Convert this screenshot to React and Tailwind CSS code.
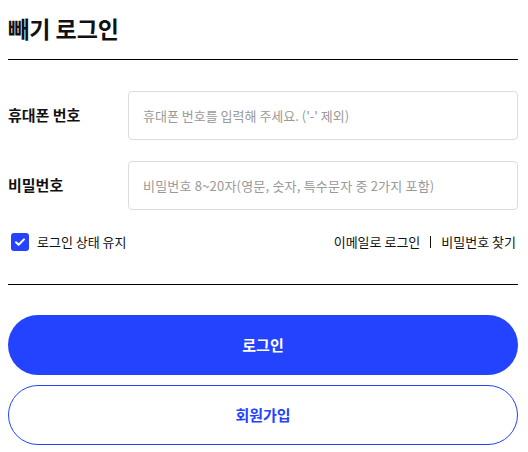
export default function App() {
  return (
    <div className="bg-white pl-2 pr-[10px] font-['Noto_Sans_CJK_KR',sans-serif] text-[#111]">
      <div className="h-[60px] flex items-center border-b border-black">
        <h1 className="text-[23px] font-bold leading-none -mt-[2px]">빼기 로그인</h1>
      </div>

      {/* 입력 */}
      <div className="mt-[31px] flex items-center">
        <label className="w-[120px] text-[15px] font-bold">휴대폰 번호</label>
        <input
          className="flex-1 h-[49px] border border-[#dcdcdc] rounded-[4px] px-[14px] text-[13px] placeholder:text-[#999] outline-none"
          placeholder="휴대폰 번호를 입력해 주세요. ('-' 제외)"
        />
      </div>
      <div className="mt-[21px] flex items-center">
        <label className="w-[120px] text-[15px] font-bold">비밀번호</label>
        <input
          type="password"
          className="flex-1 h-[49px] border border-[#dcdcdc] rounded-[4px] px-[14px] text-[13px] tracking-[0.2px] placeholder:text-[#999] outline-none"
          placeholder="비밀번호 8~20자(영문, 숫자, 특수문자 중 2가지 포함)"
        />
      </div>

      <div className="mt-[23px] h-[18px] flex items-center justify-between text-[13px]">
        <label className="flex items-center gap-[8px] pl-[3px]">
          <span className="w-[18px] h-[18px] rounded-[3px] bg-[#2443ff] flex items-center justify-center">
            <svg width="12" height="12" viewBox="0 0 12 12" fill="none">
              <path d="M2 6.2l2.6 2.6L10 3.4" stroke="white" strokeWidth="2" strokeLinecap="round" strokeLinejoin="round" />
            </svg>
          </span>
          로그인 상태 유지
        </label>
        <div className="flex items-center gap-[10px] pr-[2px]">
          <span>이메일로 로그인</span>
          <span className="w-px h-[12px] bg-[#111]"></span>
          <span>비밀번호 찾기</span>
        </div>
      </div>

      <div className="mt-[33px] border-t border-black"></div>

      <button className="mt-[30px] w-full h-[60px] rounded-full bg-[#2443ff] text-white text-[15px] font-bold">
        로그인
      </button>
      <button className="mt-[10px] w-full h-[60px] rounded-full border border-[#2443ff] text-[#2443ff] text-[15px] font-bold">
        회원가입
      </button>
    </div>
  )
}
